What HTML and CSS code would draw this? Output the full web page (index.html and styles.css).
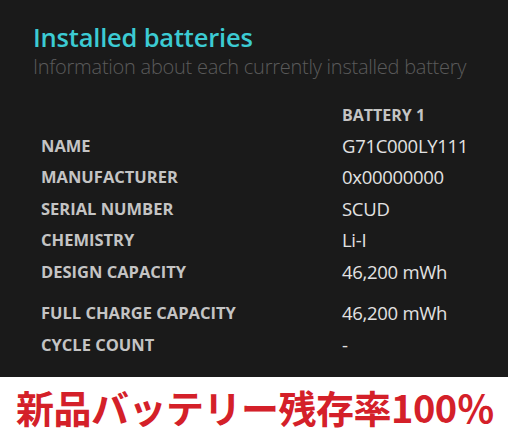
FILE: index.html
```html
<!DOCTYPE html>
<html>
<head>
<meta charset="utf-8">
<link rel="stylesheet" href="styles.css">
</head>
<body>
<div class="panel">
  <h1 class="title">Installed batteries</h1>
  <p class="subtitle">Information about each currently installed battery</p>
  <div class="grid">
    <div class="label"></div><div class="head">BATTERY 1</div>
    <div class="label">NAME</div><div class="value">G71C000LY111</div>
    <div class="label">MANUFACTURER</div><div class="value">0x00000000</div>
    <div class="label">SERIAL NUMBER</div><div class="value">SCUD</div>
    <div class="label">CHEMISTRY</div><div class="value">Li-I</div>
    <div class="label">DESIGN CAPACITY</div><div class="value">46,200 mWh</div>
    <div class="label gap">FULL CHARGE CAPACITY</div><div class="value gap">46,200 mWh</div>
    <div class="label">CYCLE COUNT</div><div class="value">-</div>
  </div>
</div>
<div class="banner">新品バッテリー残存率100％</div>
</body>
</html>
```
FILE: styles.css
```css
html, body {
  margin: 0;
  padding: 0;
  background: #ffffff;
}
body {
  width: 508px;
  height: 436px;
  overflow: hidden;
}
.panel {
  background: #1a1a1a;
  height: 377px;
  box-sizing: border-box;
  padding: 20px 0 0 33px;
  font-family: "Open Sans", "Noto Sans", sans-serif;
}
.title {
  margin: 0;
  font-size: 25.5px;
  font-weight: 600;
  color: #3ccbd3;
  line-height: 34px;
  letter-spacing: -0.2px;
}
.subtitle {
  margin: 0;
  font-size: 20px;
  font-weight: 300;
  color: #5a5a5a;
  line-height: 26px;
  letter-spacing: -0.25px;
}
.grid {
  display: grid;
  grid-template-columns: 301px auto;
  margin-top: 18px;
  padding-left: 8px;
}
.label, .value, .head {
  height: 31.5px;
  line-height: 31.5px;
}
.label {
  font-size: 16.5px;
  font-weight: 700;
  color: #c4c4c4;
}
.head {
  font-size: 16px;
  font-weight: 700;
  color: #c4c4c4;
  line-height: 35px;
}
.value {
  font-size: 18.5px;
  color: #e2e2e2;
  letter-spacing: -0.3px;
}
.gap {
  margin-top: 10px;
}
.banner {
  height: 59px;
  display: flex;
  align-items: center;
  padding-left: 16px;
  font-family: "Noto Sans CJK JP", sans-serif;
  font-weight: 700;
  font-size: 38px;
  color: #d42029;
  letter-spacing: -0.5px;
  line-height: 1;
}
```
